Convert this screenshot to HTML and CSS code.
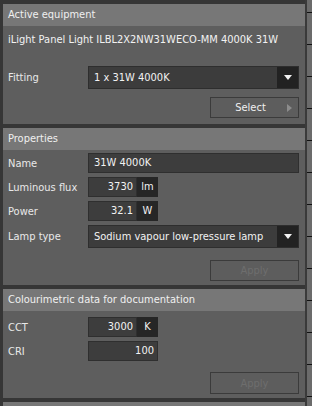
FILE: index.html
```html
<!DOCTYPE html>
<html>
<head>
<meta charset="utf-8">
<link rel="stylesheet" href="styles.css">
</head>
<body>
<div class="frame">
  <div class="panel">
    <section class="sec sec1">
      <div class="hdr">Active equipment</div>
      <div class="body">
        <div class="product">iLight Panel Light ILBL2X2NW31WECO-MM 4000K 31W</div>
        <div class="row fit-row">
          <span class="lbl">Fitting</span>
          <div class="select"><span class="val">1 x 31W 4000K</span><span class="arrow"><svg width="8" height="5" viewBox="0 0 8 5"><path d="M0 0H8L4 5Z" fill="#f2f2f2"/></svg></span></div>
        </div>
        <div class="btn-row"><button class="btn sel-btn"><span>Select</span><svg class="tri" width="5" height="8" viewBox="0 0 5 8"><path d="M0 0L5 4L0 8Z" fill="#8c8c8c"/></svg></button></div>
      </div>
    </section>
    <section class="sec sec2">
      <div class="hdr">Properties</div>
      <div class="body">
        <div class="row"><span class="lbl">Name</span><div class="input wide">31W 4000K</div></div>
        <div class="row"><span class="lbl">Luminous flux</span><div class="input num">3730</div><div class="unit">lm</div></div>
        <div class="row"><span class="lbl">Power</span><div class="input num">32.1</div><div class="unit">W</div></div>
        <div class="row lamp"><span class="lbl">Lamp type</span><div class="select"><span class="val">Sodium vapour low-pressure lamp</span><span class="arrow"><svg width="8" height="5" viewBox="0 0 8 5"><path d="M0 0H8L4 5Z" fill="#f2f2f2"/></svg></span></div></div>
        <div class="btn-row apply-row"><button class="btn apply">Apply</button></div>
      </div>
    </section>
    <section class="sec sec3">
      <div class="hdr">Colourimetric data for documentation</div>
      <div class="body">
        <div class="row"><span class="lbl">CCT</span><div class="input num">3000</div><div class="unit">K</div></div>
        <div class="row"><span class="lbl">CRI</span><div class="input num long">100</div></div>
        <div class="btn-row apply-row3"><button class="btn apply">Apply</button></div>
      </div>
    </section>
    <section class="sec sec4">
      <div class="hdr"></div>
    </section>
  </div>
  <div class="ruler">
    <i></i><i></i><i></i><i></i><i></i><i></i><i></i><i></i><i></i><i></i><i></i><i></i><i></i>
  </div>
</div>
</body>
</html>
```

FILE: styles.css
```css
html, body {
  margin: 0;
  padding: 0;
  background: #363636;
}
body {
  width: 312px;
  height: 406px;
  overflow: hidden;
  font-family: "DejaVu Sans Condensed", "DejaVu Sans", sans-serif;
  font-size: 11px;
  color: #e9e9e9;
}
.frame {
  display: flex;
  height: 406px;
  padding: 4px 0 0 3px;
  box-sizing: border-box;
}
.panel {
  width: 302px;
  display: flex;
  flex-direction: column;
  gap: 4px;
}
.sec {
  background: #5e5e5e;
}
.hdr {
  height: 22px;
  line-height: 22px;
  background: #777777;
  padding-left: 5px;
  color: #f0f0f0;
}
.body {
  padding: 0 6px 0 5px;
  display: flex;
  flex-direction: column;
}
.sec1 .body { height: 98px; box-sizing: border-box; padding-top: 7px; }
.sec2 .body { height: 135px; box-sizing: border-box; padding-top: 3px; gap: 4px; }
.sec3 .body { height: 87px; box-sizing: border-box; padding-top: 6px; gap: 4px; }
.sec4 { flex: 1; }
.product {
  height: 14px;
  line-height: 14px;
  color: #f2f2f2;
}
.row {
  display: flex;
  align-items: center;
  height: 20px;
}
.lbl {
  width: 80px;
  flex: none;
}
.fit-row {
  margin-top: 19px;
  height: 23px;
}
.lamp { height: 23px; }
.select {
  flex: 1;
  height: 23px;
  display: flex;
  background: #3c3c3c;
  border: 1px solid #2e2e2e;
  box-sizing: border-box;
}
.select .val {
  flex: 1;
  line-height: 21px;
  padding-left: 5px;
  color: #f2f2f2;
}
.select .arrow {
  width: 21px;
  background: #222222;
  display: flex;
  align-items: center;
  justify-content: center;
}
.input {
  height: 20px;
  line-height: 18px;
  background: #3d3d3d;
  border: 1px solid #2f2f2f;
  box-sizing: border-box;
  color: #f2f2f2;
}
.input.wide {
  flex: 1;
  padding-left: 5px;
}
.input.num {
  width: 49px;
  text-align: right;
  padding-right: 3px;
}
.input.num.long { width: 70px; }
.unit {
  width: 21px;
  height: 20px;
  line-height: 20px;
  background: #262626;
  text-align: center;
  color: #f2f2f2;
}
.btn-row {
  display: flex;
  justify-content: flex-end;
}
.sec1 .btn-row { margin-top: 8px; }
.btn {
  width: 89px;
  height: 21px;
  padding: 0;
  margin: 0;
  background: #5d5d5d;
  border: 1px solid #3b3b3b;
  font: inherit;
  position: relative;
  color: #f0f0f0;
}
.sel-btn span {
  position: relative;
  left: -4px;
}
.sel-btn .tri {
  position: absolute;
  right: 6px;
  top: 6px;
}
.apply {
  color: #6e6e6e;
}
.apply-row { margin-top: 8px; }
.apply-row3 { margin-top: 7px; }
.apply-row3 .btn { height: 22px; }
.ruler {
  width: 7px;
  flex: none;
  margin-top: -4px;
  border-left: 2px solid #3a3a3a;
  background: #6b6b6b;
  display: flex;
  flex-direction: column;
  padding-top: 12px;
  box-sizing: border-box;
  gap: 31px;
}
.ruler i {
  display: block;
  height: 1px;
  background: #111;
}
```
